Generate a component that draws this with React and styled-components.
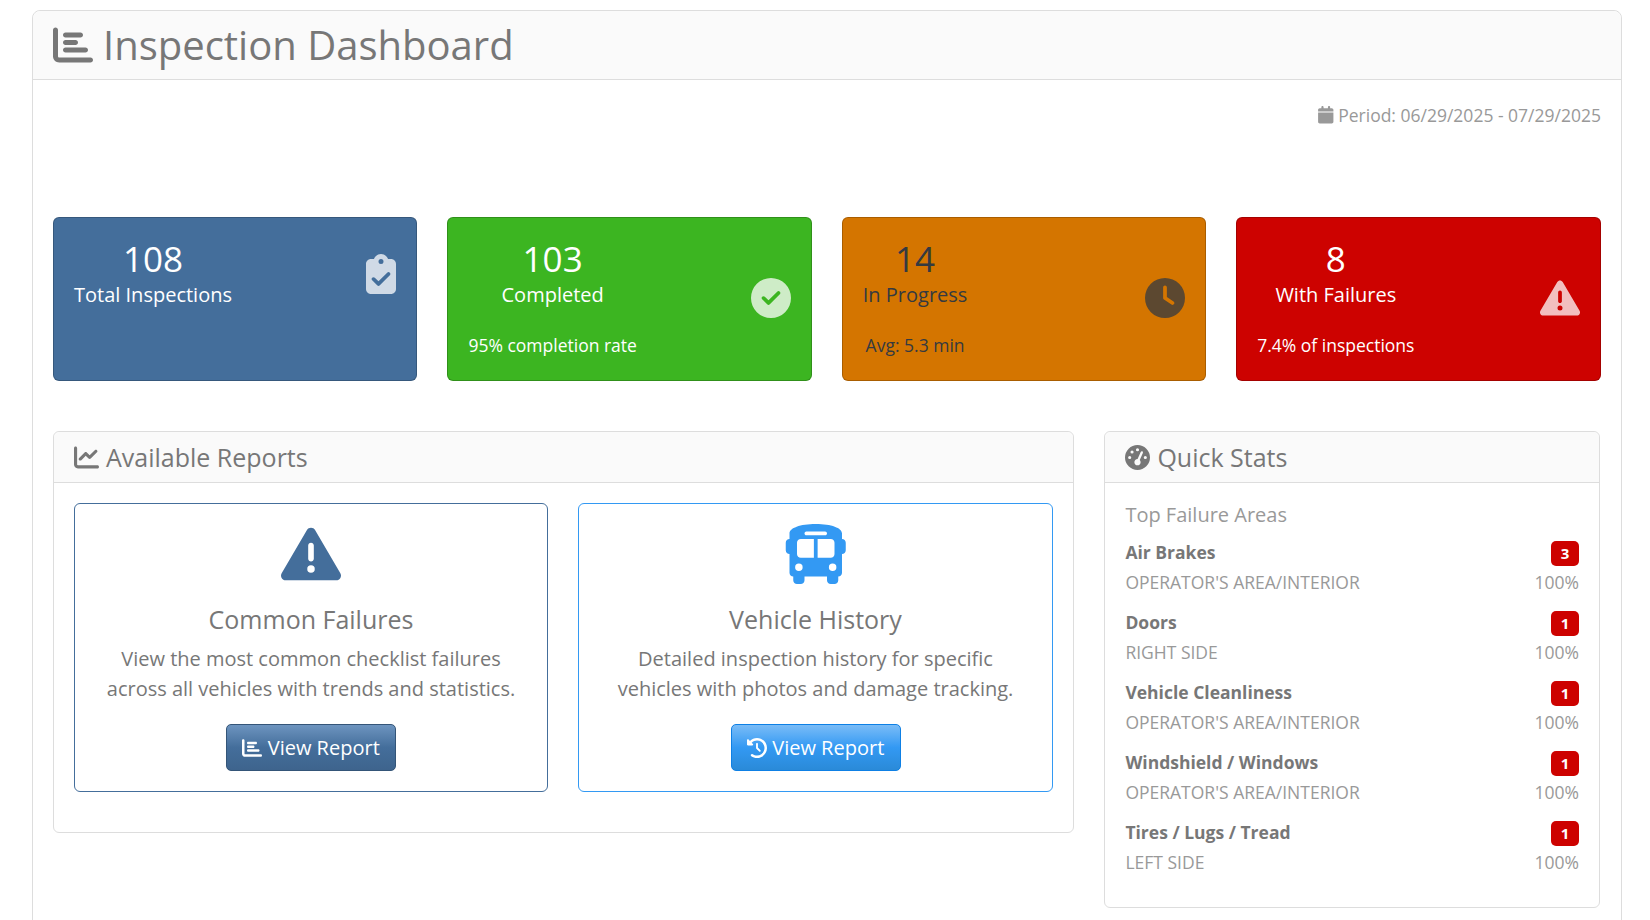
import React from "react";
import styled, { createGlobalStyle } from "styled-components";
import {
  FaBus,
  FaCalendar,
  FaChartBar,
  FaChartLine,
  FaCircleCheck,
  FaClipboardCheck,
  FaClock,
  FaClockRotateLeft,
  FaGaugeHigh,
  FaTriangleExclamation,
} from "react-icons/fa6";

const GlobalStyle = createGlobalStyle`
  html, body {
    margin: 0;
    height: 920px;
    overflow: hidden;
    background: #fff;
    color: #777;
    font-family: "Open Sans", "Liberation Sans", sans-serif;
    font-weight: 400;
  }
  * { box-sizing: border-box; }
`;

const Page = styled.div`
  padding: 10px 28px 0 32px;
`;

const Dashboard = styled.section`
  border: 1px solid #ddd;
  border-radius: 8px;
`;

const DashboardHeader = styled.header`
  display: flex;
  align-items: center;
  gap: 10px;
  height: 69px;
  padding: 0 20px;
  background: #fafafa;
  border-bottom: 1px solid #ddd;
  border-radius: 8px 8px 0 0;
`;

const Title = styled.h1`
  margin: 0;
  font-size: 40px;
  line-height: 48px;
  font-weight: 400;
  color: #777;
`;

const DashboardBody = styled.div`
  padding: 20px;
`;

const Period = styled.div`
  display: flex;
  justify-content: flex-end;
  align-items: center;
  gap: 4px;
  height: 30px;
  margin-bottom: 87px;
  font-size: 17.5px;
  color: #999;
`;

const StatsGrid = styled.div`
  display: grid;
  grid-template-columns: repeat(4, 364.4px);
  gap: 30px;
  margin-bottom: 50px;
`;

const StatCard = styled.div`
  height: 164px;
  padding: 20px;
  background: ${(props) => props.$bg};
  color: ${(props) => props.$fg || "#fff"};
  border: 1px solid rgba(0, 0, 0, 0.2);
  border-radius: 6px;
`;

const StatRow = styled.div`
  display: flex;
  justify-content: space-between;
  align-items: center;
`;

const StatText = styled.div`
  text-align: center;
`;

const StatNumber = styled.div`
  font-size: 35px;
  line-height: 42px;
`;

const StatLabel = styled.div`
  font-size: 20px;
  line-height: 30px;
`;

const StatNote = styled.div`
  margin-top: 23px;
  height: 25px;
  font-size: 17.5px;
  line-height: 24px;
`;

const StatIcon = styled.span`
  display: flex;
  opacity: 0.75;
  svg {
    width: ${(props) => props.$w}px;
    height: 40px;
  }
`;

const Columns = styled.div`
  display: grid;
  grid-template-columns: 1021px 495.6px;
  gap: 30.4px;
  align-items: start;
`;

const Panel = styled.div`
  border: 1px solid #ddd;
  border-radius: 6px;
`;

const PanelHeader = styled.div`
  display: flex;
  align-items: center;
  gap: 7px;
  height: 51px;
  padding: 0 20px;
  background: #fafafa;
  border-bottom: 1px solid #ddd;
  border-radius: 6px 6px 0 0;
  font-size: 25px;
  color: #777;
`;

const PanelBody = styled.div`
  padding: 20px;
`;

const ReportGrid = styled.div`
  display: grid;
  grid-template-columns: 474px 475px;
  gap: 30px;
  margin-bottom: 20px;
`;

const ReportCard = styled.div`
  display: flex;
  flex-direction: column;
  align-items: center;
  padding: 20px;
  border: 1px solid ${(props) => props.$accent};
  border-radius: 6px;
  text-align: center;
  svg.report-icon {
    display: block;
    width: ${(props) => props.$iconWidth}px;
    height: 60px;
    color: ${(props) => props.$accent};
  }
`;

const ReportTitle = styled.h3`
  margin: 20px 0 0;
  font-size: 25px;
  line-height: 30px;
  font-weight: 400;
  color: #777;
`;

const ReportText = styled.p`
  margin: 10px 0 20px;
  font-size: 20px;
  line-height: 30px;
`;

const Button = styled.button`
  display: flex;
  align-items: center;
  justify-content: center;
  gap: 5.5px;
  width: 170px;
  height: 47px;
  padding: 0;
  color: #fff;
  font-family: inherit;
  font-size: 20px;
  font-weight: 400;
  border-radius: 5px;
  border: 1px solid ${(props) => props.$border};
  background-image: linear-gradient(
    ${(props) => props.$light},
    ${(props) => props.$base} 50%,
    ${(props) => props.$dark}
  );
`;

const SectionLabel = styled.div`
  margin-bottom: 10px;
  font-size: 20px;
  line-height: 24px;
  color: #999;
`;

const FailureItem = styled.div`
  margin-bottom: 10px;
`;

const FailureRow = styled.div`
  display: flex;
  justify-content: space-between;
  align-items: center;
  height: 30px;
  font-size: 17.5px;
  color: ${(props) => (props.$sub ? "#999" : "#777")};
  font-weight: ${(props) => (props.$sub ? 400 : 700)};
`;

const Badge = styled.span`
  display: flex;
  align-items: center;
  justify-content: center;
  width: 28px;
  height: 25px;
  margin-top: 2px;
  border-radius: 5px;
  background: #cd0200;
  color: #fff;
  font-size: 15px;
  font-weight: 700;
`;

const stats = [
  { value: 108, label: "Total Inspections", bg: "#446e9b", icon: FaClipboardCheck, iconWidth: 30 },
  { value: 103, label: "Completed", note: "95% completion rate", bg: "#3cb521", icon: FaCircleCheck, iconWidth: 40 },
  { value: 14, label: "In Progress", note: "Avg: 5.3 min", bg: "#d47500", fg: "#343a40", icon: FaClock, iconWidth: 40 },
  { value: 8, label: "With Failures", note: "7.4% of inspections", bg: "#cd0200", icon: FaTriangleExclamation, iconWidth: 40 },
];

const failures = [
  { name: "Air Brakes", area: "OPERATOR'S AREA/INTERIOR", count: 3 },
  { name: "Doors", area: "RIGHT SIDE", count: 1 },
  { name: "Vehicle Cleanliness", area: "OPERATOR'S AREA/INTERIOR", count: 1 },
  { name: "Windshield / Windows", area: "OPERATOR'S AREA/INTERIOR", count: 1 },
  { name: "Tires / Lugs / Tread", area: "LEFT SIDE", count: 1 },
];

export default function App() {
  return (
    <Page>
      <GlobalStyle />
      <Dashboard>
        <DashboardHeader>
          <FaChartBar size={40} />
          <Title>Inspection Dashboard</Title>
        </DashboardHeader>
        <DashboardBody>
          <Period>
            <FaCalendar size={17.5} />
            Period: 06/29/2025 - 07/29/2025
          </Period>

          <StatsGrid>
            {stats.map((s) => (
              <StatCard key={s.label} $bg={s.bg} $fg={s.fg}>
                <StatRow>
                  <StatText>
                    <StatNumber>{s.value}</StatNumber>
                    <StatLabel>{s.label}</StatLabel>
                    {s.note && <StatNote>{s.note}</StatNote>}
                  </StatText>
                  <StatIcon $w={s.iconWidth}>
                    <s.icon />
                  </StatIcon>
                </StatRow>
              </StatCard>
            ))}
          </StatsGrid>

          <Columns>
            <Panel>
              <PanelHeader>
                <FaChartLine />
                Available Reports
              </PanelHeader>
              <PanelBody>
                <ReportGrid>
                  <ReportCard $accent="#446e9b" $iconWidth={60}>
                    <FaTriangleExclamation className="report-icon" />
                    <ReportTitle>Common Failures</ReportTitle>
                    <ReportText>
                      View the most common checklist failures
                      <br />
                      across all vehicles with trends and statistics.
                    </ReportText>
                    <Button $light="#6d94bf" $base="#446e9b" $dark="#3e648d" $border="#345578">
                      <FaChartBar />
                      View Report
                    </Button>
                  </ReportCard>
                  <ReportCard $accent="#3399f3" $iconWidth={67.5}>
                    <FaBus className="report-icon" />
                    <ReportTitle>Vehicle History</ReportTitle>
                    <ReportText>
                      Detailed inspection history for specific
                      <br />
                      vehicles with photos and damage tracking.
                    </ReportText>
                    <Button $light="#7abcf7" $base="#3399f3" $dark="#2a8ad8" $border="#0e80e5">
                      <FaClockRotateLeft />
                      View Report
                    </Button>
                  </ReportCard>
                </ReportGrid>
              </PanelBody>
            </Panel>

            <Panel>
              <PanelHeader>
                <FaGaugeHigh />
                Quick Stats
              </PanelHeader>
              <PanelBody>
                <SectionLabel>Top Failure Areas</SectionLabel>
                {failures.map((f) => (
                  <FailureItem key={f.name}>
                    <FailureRow>
                      {f.name}
                      <Badge>{f.count}</Badge>
                    </FailureRow>
                    <FailureRow $sub>
                      {f.area}
                      <span>100%</span>
                    </FailureRow>
                  </FailureItem>
                ))}
              </PanelBody>
            </Panel>
          </Columns>
        </DashboardBody>
      </Dashboard>
    </Page>
  );
}
